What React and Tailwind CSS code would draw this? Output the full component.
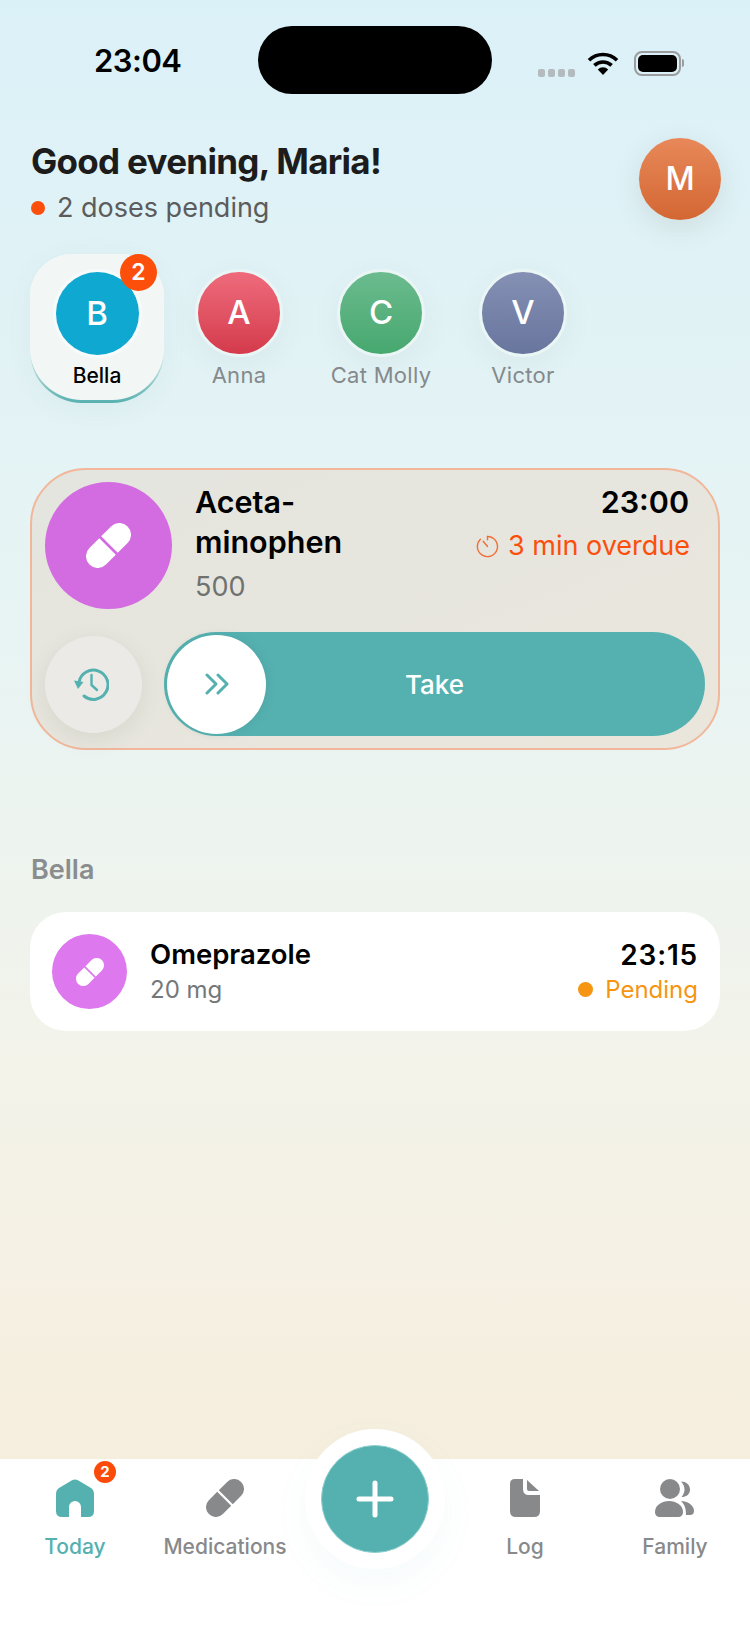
import React from 'react';

const members = [
  { letter: 'A', name: 'Anna', color: 'bg-linear-to-b from-[#ee6b7c] to-[#d43a4c]' },
  { letter: 'C', name: 'Cat Molly', color: 'bg-linear-to-b from-[#6bbb8e] to-[#46a86f]' },
  { letter: 'V', name: 'Victor', color: 'bg-linear-to-b from-[#8590b4] to-[#68759d]' },
];

function Pill({ className }) {
  return (
    <svg viewBox="0 0 100 100" className={className} fill="currentColor">
      <g transform="rotate(-45 50 50)">
        <path d="M47 24H16a26 26 0 0 0 0 52H47Z" />
        <path d="M53 24H84a26 26 0 0 1 0 52H53Z" />
      </g>
    </svg>
  );
}

function StatusIcons() {
  return (
    <div className="flex items-center">
      <div className="flex gap-[3px] mt-[20px] mr-[12px]">
        <div className="w-[7px] h-[8px] rounded-[2px] bg-[#b4bbbf]"></div>
        <div className="w-[7px] h-[8px] rounded-[2px] bg-[#b4bbbf]"></div>
        <div className="w-[7px] h-[8px] rounded-[2px] bg-[#b4bbbf]"></div>
        <div className="w-[7px] h-[8px] rounded-[2px] bg-[#b4bbbf]"></div>
      </div>
      <svg viewBox="0 0 32 23" className="w-[32px] h-[23px] mr-[15px]">
        <g fill="none" stroke="#000" strokeWidth="3.6">
          <path d="M2 8.2a20 20 0 0 1 28 0" />
          <path d="M7.4 13.4a12.4 12.4 0 0 1 17.2 0" />
        </g>
        <path d="M10.8 17.4a7.4 7.4 0 0 1 10.4 0L16 23Z" fill="#000" />
      </svg>
      <div className="w-[47px] h-[25px] rounded-[8px] border-2 border-[#9a9c9d] p-[2px]">
        <div className="w-full h-full rounded-[5px] bg-black"></div>
      </div>
      <div className="w-[2px] h-[8px] ml-[1px] rounded-r-full bg-[#9a9c9d]"></div>
    </div>
  );
}

function MemberAvatar({ letter, name, color }) {
  return (
    <div className="w-[134px] flex flex-col items-center pt-[15px]">
      <div className={`w-[88px] h-[88px] rounded-full border-[3px] border-[#eaf5f5] flex items-center justify-center text-white text-[33px] font-medium shadow-[0_8px_30px_rgba(60,90,90,0.06)] ${color}`}>
        {letter}
      </div>
      <span className="mt-[3px] text-[22px] leading-[30px] tracking-[0.3px] whitespace-nowrap text-[#85898b]">{name}</span>
    </div>
  );
}

function TabItem({ label, active, children }) {
  return (
    <div className={`w-[150px] flex flex-col items-center ${active ? 'text-[#55b1b0]' : 'text-[#88898b]'}`}>
      <div className="h-[38px] flex items-center justify-center relative">{children}</div>
      <span className="mt-[15px] text-[21px] leading-[30px] font-medium">{label}</span>
    </div>
  );
}

export default function App() {
  return (
    <div className="w-[750px] h-[1631px] flex flex-col overflow-hidden font-[Inter,sans-serif] bg-[linear-gradient(to_bottom,#dbf1f8_0%,#e8f4f3_40%,#f3f3ea_65%,#f6eedd_90%)]">
      {/* status bar */}
      <div className="flex items-start h-[94px] pt-[26px] pl-[94px] pr-[66px]">
        <span className="mt-[17px] w-[89px] text-[31px] leading-[36px] font-semibold tracking-[-0.5px] text-black">23:04</span>
        <div className="w-[234px] h-[68px] ml-[75px] rounded-full bg-black"></div>
        <div className="mt-[23px] ml-auto">
          <StatusIcons />
        </div>
      </div>

      {/* greeting */}
      <div className="flex items-start justify-between mt-[45px] pl-[31px] pr-[29px]">
        <div>
          <h1 className="text-[35px] leading-[44px] font-bold tracking-[-0.7px] text-[#1c1c1c]">Good evening, Maria!</h1>
          <div className="flex items-center gap-[12px] mt-[6px]">
            <div className="w-[14px] h-[14px] rounded-full bg-[#fb4f0b]"></div>
            <span className="text-[27px] leading-[38px] text-[#5c5c5c]">2 doses pending</span>
          </div>
        </div>
        <div className="w-[82px] h-[82px] -mt-[1px] rounded-full bg-linear-to-b from-[#e88858] to-[#d36733] flex items-center justify-center text-white text-[32px] font-medium shadow-[0_8px_28px_rgba(90,90,70,0.13)]">
          M
        </div>
      </div>

      {/* family members */}
      <div className="flex gap-[8px] mt-[27px] pl-[30px]">
        <div className="w-[134px] h-[149px] rounded-t-[42px] rounded-b-[52px] bg-linear-to-b from-[#f2f7f6] from-60% to-[#55b1b0] shadow-[0_4px_28px_rgba(60,90,90,0.05)]">
          <div className="relative h-[146px] rounded-t-[42px] rounded-b-[52px] bg-[#f2f7f6] flex flex-col items-center pt-[18px]">
            <div className="w-[83px] h-[83px] rounded-full bg-[#0fa8d0] flex items-center justify-center text-white text-[33px] font-medium shadow-[0_0_0_3px_#f8fbfb]">
              B
            </div>
            <span className="mt-[6px] text-[21px] leading-[30px] font-medium text-black">Bella</span>
            <div className="absolute top-0 right-[7px] w-[37px] h-[37px] rounded-full bg-[#fb4f0b] flex items-center justify-center text-white text-[23px] font-semibold">
              2
            </div>
          </div>
        </div>
        {members.map((m) => (
          <MemberAvatar key={m.name} {...m} />
        ))}
      </div>

      {/* overdue card */}
      <div className="mt-[65px] mx-[30px] h-[282px] rounded-[56px] border-2 border-[#f2b79a] bg-linear-to-br from-[#e4e5df] to-[#eae6dc] pl-[13px] pr-[13px] pt-[12px]">
        <div className="flex h-[127px]">
          <div className="w-[127px] h-[127px] rounded-full bg-[#d26ce0] flex items-center justify-center text-white">
            <Pill className="w-[45px] h-[45px]" />
          </div>
          <div className="ml-[23px] flex-1">
            <div className="flex justify-between items-start">
              <div className="text-[30.500px] leading-[40px] font-semibold text-black">Aceta-<br />minophen</div>
              <div className="flex flex-col items-end pr-[16px]">
                <span className="text-[30.500px] leading-[40px] font-semibold text-black">23:00</span>
                <div className="flex items-center gap-[9px] mt-[4px] -mr-[1px] text-[#fb4f0b]">
                  <svg viewBox="0 0 24 24" className="w-[23px] h-[23px]" fill="none" stroke="#f0703a" strokeWidth="1.5" strokeLinecap="round">
                    <path d="M12 1.5a10.5 10.5 0 1 1-7.4 3" />
                    <path d="M12 1.5v3.5" />
                    <path d="M12 12 7.5 6.5" />
                  </svg>
                  <span className="text-[27px] leading-[40px]">3 min overdue</span>
                </div>
              </div>
            </div>
            <div className="mt-[3px] text-[27px] leading-[36px] text-[#6f7270]">500</div>
          </div>
        </div>
        <div className="flex items-center mt-[23px]">
          <div className="w-[97px] h-[97px] rounded-full bg-[#eceae6] flex items-center justify-center shadow-[0_6px_22px_rgba(90,90,70,0.1)]">
            <svg viewBox="0 0 36 34" className="w-[36px] h-[34px] -ml-[6px]" fill="none" stroke="#55b1b0" strokeWidth="3" strokeLinecap="round" strokeLinejoin="round">
              <path d="M6 15A14.6 14.6 0 1 1 11 29" />
              <path d="M1 13.5 10.5 15 5 22Z" fill="#55b1b0" stroke="none" />
              <path d="M18.5 8v10l5.5 5" strokeWidth="2.4" />
            </svg>
          </div>
          <div className="relative ml-[22px] w-[541px] h-[104px] rounded-full bg-[#55b1b0] flex items-center justify-center">
            <span className="text-[26px] font-medium text-white">Take</span>
            <div className="absolute left-[3px] top-[2.500px] w-[99px] h-[99px] rounded-full bg-white flex items-center justify-center shadow-[2px_0_10px_rgba(40,80,80,0.1)]">
              <svg viewBox="0 0 24 22" className="w-[24px] h-[22px]" fill="none" stroke="#55b1b0" strokeWidth="3" strokeLinecap="round" strokeLinejoin="round">
                <path d="M2 2l9 9-9 9" />
                <path d="M13 2l9 9-9 9" />
              </svg>
            </div>
          </div>
        </div>
      </div>

      {/* today list */}
      <h2 className="mt-[105px] pl-[31px] text-[27px] leading-[30px] font-semibold text-[#8a8d8e]">Bella</h2>
      <div className="mt-[27px] mx-[30px] h-[119px] rounded-[36px] bg-white flex items-center pl-[22px] pr-[22px]">
        <div className="w-[75px] h-[75px] rounded-full bg-[#de78ee] flex items-center justify-center text-white">
          <Pill className="w-[28px] h-[28px]" />
        </div>
        <div className="ml-[23px] flex-1">
          <div className="-mt-[2px] text-[27.500px] leading-[36px] font-semibold text-black">Omeprazole</div>
          <div className="mt-[2px] text-[24px] leading-[32px] text-[#74787a]">20 mg</div>
        </div>
        <div className="flex flex-col items-end">
          <span className="-mt-[1px] text-[28px] leading-[36px] font-semibold tracking-[0.8px] text-black">23:15</span>
          <div className="flex items-center gap-[12px] mt-[1px]">
            <div className="w-[15px] h-[15px] rounded-full bg-[#f59512]"></div>
            <span className="text-[24px] leading-[32px] text-[#f59512]">Pending</span>
          </div>
        </div>
      </div>

      {/* tab bar */}
      <div className="relative mt-auto h-[172px] bg-white flex pt-[20px]">
        <TabItem label="Today" active>
          <svg viewBox="0 0 38 38" className="w-[38px] h-[38px]" fill="currentColor">
            <path d="M16 1.2Q19-.4 22 1.2L35 9Q38 11 38 15V32Q38 38 32 38H25V28A6 6 0 0 0 13 28V38H6Q0 38 0 32V15Q0 11 3 9Z" />
          </svg>
          <div className="absolute top-[-18px] left-[38px] w-[22px] h-[22px] rounded-full bg-[#fb4a0a] flex items-center justify-center text-white text-[15px] font-bold">
            2
          </div>
        </TabItem>
        <TabItem label="Medications">
          <Pill className="w-[38px] h-[38px]" />
        </TabItem>
        <div className="w-[150px] relative">
          <div className="absolute left-[5px] top-[-50px] w-[140px] h-[140px] rounded-full bg-white shadow-[0_14px_36px_rgba(85,177,176,0.05)] flex items-center justify-center">
            <div className="w-[108px] h-[108px] rounded-full bg-[#55b1b0] border border-[#8fd0cf] flex items-center justify-center">
              <svg viewBox="0 0 38 38" className="w-[38px] h-[38px]" stroke="#fff" strokeWidth="5" strokeLinecap="round">
                <path d="M19 3v32M3 19h32" />
              </svg>
            </div>
          </div>
        </div>
        <TabItem label="Log">
          <svg viewBox="0 0 30 38" className="w-[30px] h-[38px]" fill="currentColor">
            <path d="M5 0H13V10Q13 16 19 16H30V32Q30 38 24 38H6Q0 38 0 32V5Q0 0 5 0Z" />
            <path d="M17 1 29 12H19Q17 12 17 10Z" />
          </svg>
        </TabItem>
        <TabItem label="Family">
          <svg viewBox="0 0 40 38" className="w-[40px] h-[38px]" fill="currentColor">
            <circle cx="15" cy="10" r="10" />
            <path d="M0 33C0 26 7 22 14 22S28 26 28 33C28 36 26 38 23 38H5C2 38 0 36 0 33Z" />
            <path d="M26 2.500C31 2.500 35 5.500 35 10.500S31 18 26.500 18C28.500 15.500 29.500 13 29.500 10.500S28.500 5 26 2.500Z" />
            <path d="M26 22C32 22 39 26 39 32C39 35 37 36 35 36H31C31 30 30 26 26 22Z" />
          </svg>
        </TabItem>
      </div>
    </div>
  );
}
